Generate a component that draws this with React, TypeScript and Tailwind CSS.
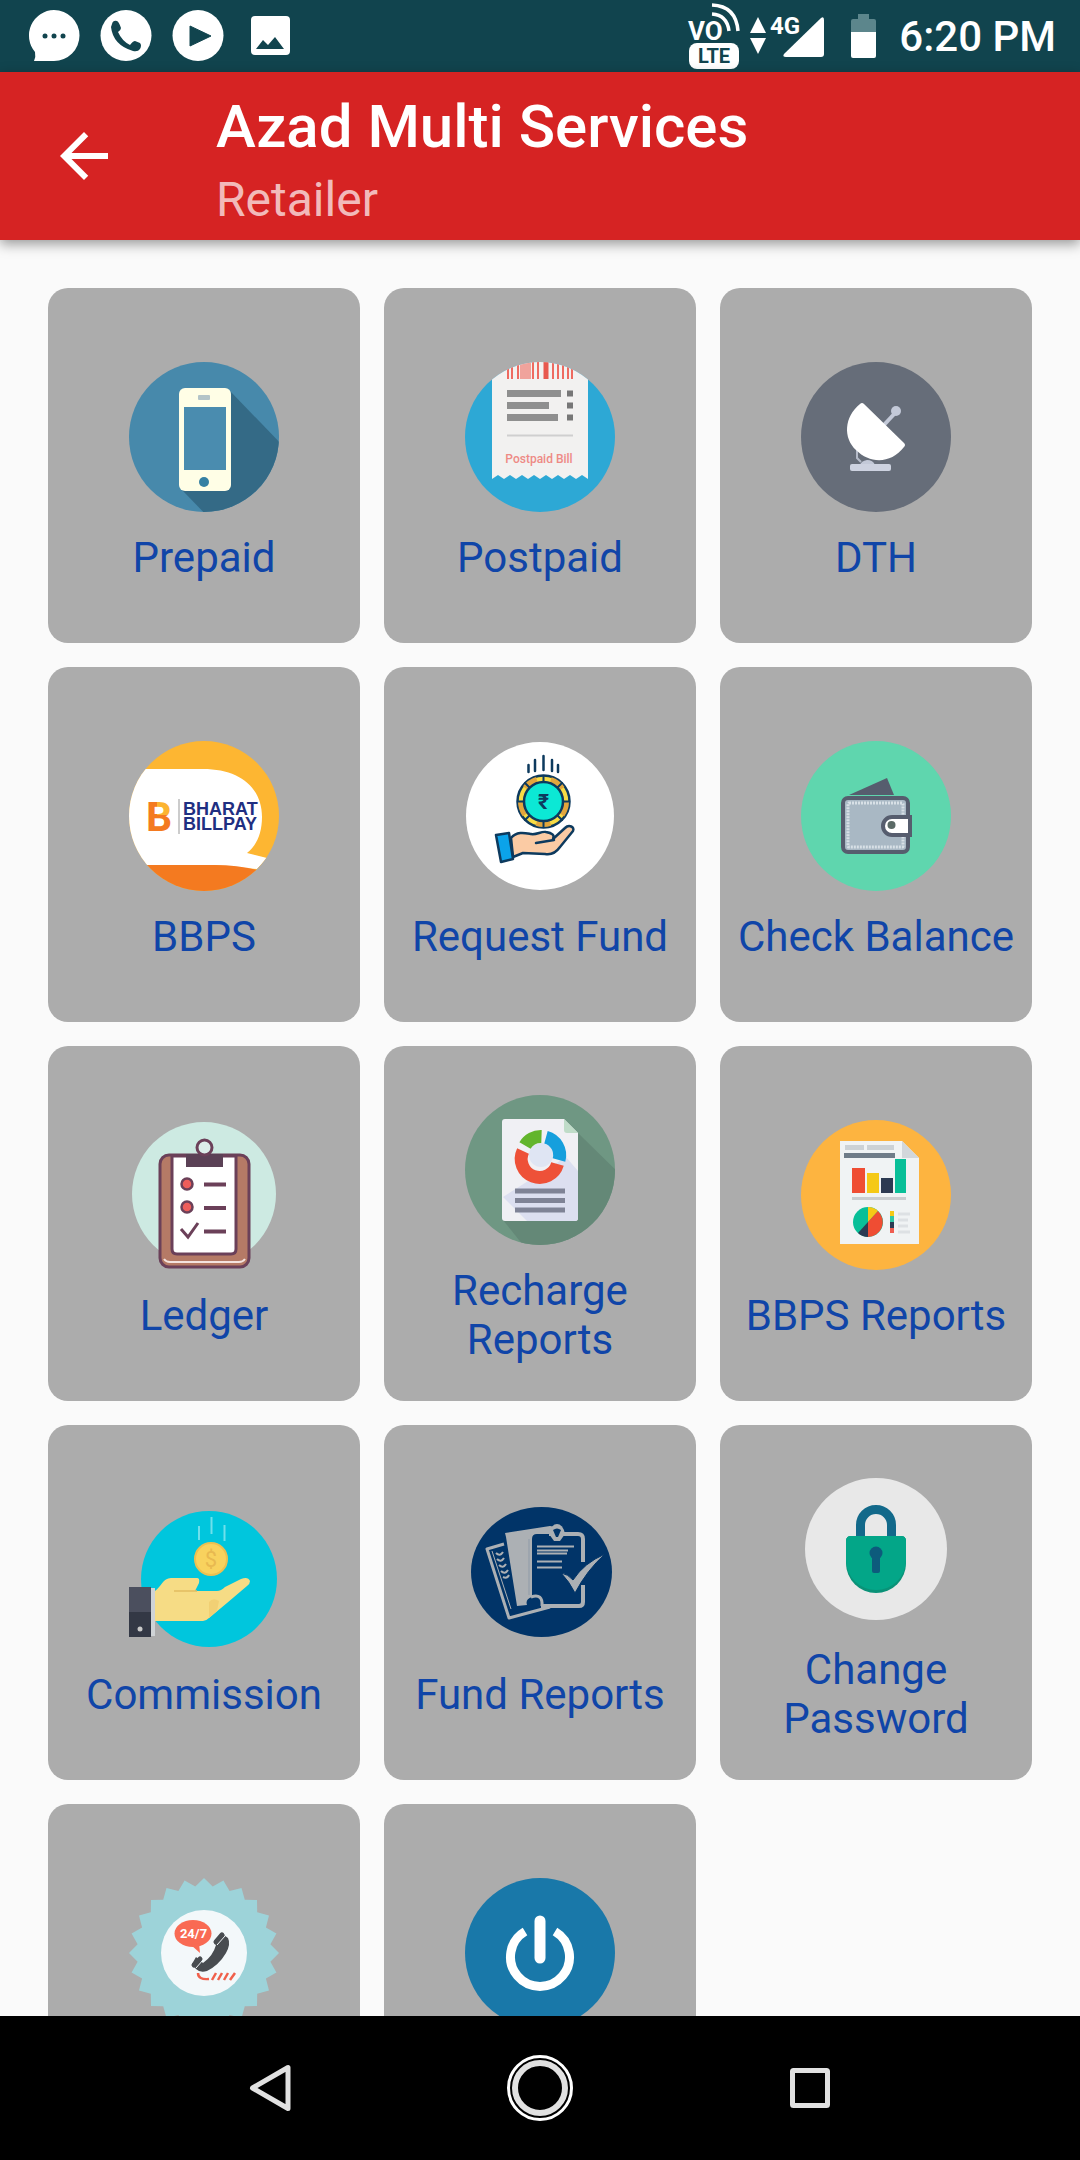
import type { ReactNode } from "react";

type Service = {
  label: string;
  icon: ReactNode;
};

function Icon({ children }: { children: ReactNode }) {
  return (
    <svg viewBox="0 0 150 150" className="size-[150px] shrink-0" aria-hidden="true">
      {children}
    </svg>
  );
}

function PrepaidIcon() {
  return (
    <Icon>
      <clipPath id="prepaid-disc"><circle cx="75" cy="75" r="75" /></clipPath>
      <g clipPath="url(#prepaid-disc)">
        <rect width="150" height="150" fill="#4789ab" />
        <path d="M101 29 L160 90 V160 H84 L53 128Z" fill="#346a86" />
      </g>
      <rect x="50" y="26" width="52" height="103" rx="6" fill="#fffee6" />
      <rect x="55" y="45" width="42" height="63" fill="#4a8caf" />
      <rect x="69" y="33" width="12" height="5" rx="1" fill="#b3c4c8" />
      <circle cx="75" cy="120" r="5" fill="#3580a3" />
    </Icon>
  );
}

function PostpaidIcon() {
  return (
    <Icon>
      <clipPath id="postpaid-disc"><circle cx="75" cy="75" r="75" /></clipPath>
      <g clipPath="url(#postpaid-disc)">
        <rect width="150" height="150" fill="#2da8d5" />
        <path d="M27 0H123V117L117 113L111 117L105 113L99 117L93 113L87 117L81 113L75 117L69 113L63 117L57 113L51 117L45 113L39 117L33 113L27 117Z" fill="#f2f1f0" />
        <path d="M43 0V17M47 0V17M53 0V17M68 0V17M73 0V17M88 0V17M93 0V17M98 0V17M103 0V17M107 0V17" stroke="#ee6a60" strokeWidth="2" />
        <path d="M58 0V17M63 0V17" stroke="#f0a39c" strokeWidth="6" />
        <path d="M81 0V17" stroke="#e8584e" strokeWidth="5" />
      </g>
      <path d="M42 31.5H96M42 43.5H84M42 55.5H93" stroke="#8f8f8f" strokeWidth="7" />
      <path d="M102 31.5H108M102 43.5H108M102 55.5H108" stroke="#777" strokeWidth="6" />
      <path d="M42 73.5H108" stroke="#cfcfcf" strokeWidth="2" />
      <text x="74" y="101" textAnchor="middle" fontSize="12" fontWeight="500" fontFamily="Roboto" fill="#ee8a85">Postpaid Bill</text>
    </Icon>
  );
}

function DthIcon() {
  return (
    <Icon>
      <circle cx="75" cy="75" r="75" fill="#666d79" />
      <path d="M82 64L95 50" stroke="#c3c9d8" strokeWidth="4" />
      <circle cx="95" cy="49" r="5" fill="#c3c9d8" />
      <path d="M56 86V96L60 100" stroke="#b4bac8" strokeWidth="2" fill="none" />
      <path d="M59 103Q60 99 66 98Q72 98 74 103Z" fill="#c3c9d8" />
      <rect x="49" y="102" width="41" height="7" rx="2" fill="#cdd2e0" />
      <path d="M59 42C43 55 42 76 55 88C69 102 90 102 103 85Q105 83 103 81L63 42Q61 40 59 42Z" fill="#fff" />
    </Icon>
  );
}

function BbpsIcon() {
  return (
    <Icon>
      <clipPath id="bbps-disc"><circle cx="75" cy="75" r="75" /></clipPath>
      {/* orange letter with a yellow upper bowl */}
      <pattern id="bbps-letter" width="150" height="150" patternUnits="userSpaceOnUse">
        <rect width="150" height="150" fill="#f47a20" />
        <rect x="28" y="50" width="30" height="24" fill="#fcb431" />
      </pattern>
      <g clipPath="url(#bbps-disc)">
        <rect width="150" height="150" fill="#fdb632" />
        <path d="M0 28H74C110 28 133 46 133 76C133 92 128 104 118 112L138 117L128 128L85 124H0Z" fill="#fff" />
        <path d="M0 124H85Q110 124 128 129L140 150H0Z" fill="#f47a20" />
      </g>
      <text x="17" y="90" fontSize="41" fontWeight="700" fontFamily="Roboto" fill="url(#bbps-letter)">B</text>
      <path d="M50 58V93" stroke="#999" strokeWidth="1" />
      <g fontSize="18" fontWeight="700" fontFamily="'Liberation Sans', sans-serif" fill="#1f2f82">
        <text x="54" y="74">BHARAT</text>
        <text x="54" y="89">BILLPAY</text>
      </g>
    </Icon>
  );
}

function RequestFundIcon() {
  return (
    <Icon>
      <circle cx="75" cy="75" r="74" fill="#fff" />
      <g stroke="#0d3a5e" strokeWidth="2.5" strokeLinejoin="round" strokeLinecap="round">
        <path d="M63.5 24V31M70 19V30M78.5 15V29M87 19V30M93 24V31" />
        <circle cx="78.5" cy="60.5" r="26" fill="#f7dc45" />
        <circle cx="78.5" cy="60.5" r="23" fill="none" stroke="#e2a63d" strokeWidth="5" strokeDasharray="14.4 14.4" strokeLinecap="butt" />
        <path d="M78.5 35V86M53 60.5H104M60 42L97 79M97 42L60 79" strokeWidth="2" />
        <circle cx="78.5" cy="60.5" r="19.5" fill="#0ce8d5" />
        <path d="M46 97C52 90 60 92 66 93C72 94 76 90 81 91C87 92 90 94 88 98L100 87C104 83 110 86 108 90L95 106C90 113 85 114 80 113L58 112L48 116Z" fill="#fbcba4" />
        <path d="M71 102L89 99" fill="none" />
        <path d="M31 94L44 92L48 118L36 121Z" fill="#0ba3ea" />
      </g>
      <text x="78.5" y="68" textAnchor="middle" fontSize="21" fontWeight="700" fontFamily="Roboto, 'Noto Sans', sans-serif" fill="#0d3a5e">₹</text>
    </Icon>
  );
}

function WalletIcon() {
  return (
    <Icon>
      <circle cx="75" cy="75" r="75" fill="#5fd6ae" />
      <path d="M48 54L86 37L93 54Z" fill="#565d6e" />
      <rect x="42" y="57" width="65" height="54" rx="5" fill="#a9b8c4" stroke="#565d6e" strokeWidth="4" />
      <rect x="47" y="62" width="55" height="44" rx="1" fill="none" stroke="#d8e0e6" strokeWidth="3" strokeDasharray="2 1" />
      <path d="M109 76H91A9 9 0 0 0 91 94H109Z" fill="#fff" stroke="#565d6e" strokeWidth="4" />
      <circle cx="90.5" cy="84" r="4" fill="#5b6a66" />
    </Icon>
  );
}

function LedgerIcon() {
  return (
    <Icon>
      <circle cx="75" cy="74" r="72" fill="#cdeae2" />
      <path d="M32 130H119V150H32Z" fill="#acacac" />
      <rect x="31" y="35" width="89" height="112" rx="9" fill="#b57a66" stroke="#6b4059" strokeWidth="3" />
      <path d="M43 36H107V129Q107 134 102 134H48Q43 134 43 129Z" fill="#fff" stroke="#6b4059" strokeWidth="3" />
      <path d="M35 139Q37 142 41 142H110Q114 142 116 139" fill="none" stroke="#f4e3df" strokeWidth="2" />
      <rect x="57" y="34" width="37" height="13" fill="#5b4156" />
      <circle cx="75.5" cy="27.5" r="7.5" fill="#dceeea" stroke="#6b4059" strokeWidth="3" />
      <g fill="#ee5d5b" stroke="#6b4059" strokeWidth="2.5">
        <circle cx="58" cy="64" r="5.5" />
        <circle cx="58" cy="87" r="5.5" />
        <path d="M75 64.5H97M75 88H97M75 111.5H97" strokeWidth="4" />
        <path d="M52 109L59 117L69 103" fill="none" strokeWidth="3" />
      </g>
    </Icon>
  );
}

function RechargeReportsIcon() {
  return (
    <Icon>
      <clipPath id="recharge-disc"><circle cx="75" cy="75" r="75" /></clipPath>
      <g clipPath="url(#recharge-disc)">
        <rect width="150" height="150" fill="#6f9783" />
        <path d="M112 37L160 84V160H66L38 125Z" fill="#648877" />
      </g>
      <path d="M40 24H99L113 38V123Q113 126 110 126H40Q37 126 37 123V27Q37 24 40 24Z" fill="#f0f0f4" />
      <path d="M101 62L113 76V123Q113 126 110 126H62L38 102Z" fill="#dcdff0" />
      <path d="M99 24L113 38H102Q99 38 99 35Z" fill="#bfdcc8" />
      <circle cx="76" cy="60" r="12" fill="#dfe5f3" />
      <g fill="none" strokeWidth="13">
        <path d="M81 42.2A18.5 18.5 0 0 1 94 65" stroke="#159fdd" />
        <path d="M92.5 69A18.5 18.5 0 1 1 58 56" stroke="#ee5138" />
        <path d="M60 50.5A18.5 18.5 0 0 1 76.5 41.5" stroke="#62b52c" />
      </g>
      <path d="M50 96H100M50 105.5H100M50 115H100" stroke="#7f8396" strokeWidth="5" />
    </Icon>
  );
}

function BbpsReportsIcon() {
  return (
    <Icon>
      <circle cx="75" cy="75" r="75" fill="#fdb440" />
      <path d="M39 21H101L118 38V124H39Z" fill="#f0f3f4" />
      <path d="M101 21L118 38H101Z" fill="#d2d7db" />
      <path d="M44 27.5H63M66 27.5H93" stroke="#ccd2d6" strokeWidth="5" />
      <path d="M43 35.5H94" stroke="#6f7c88" strokeWidth="5" />
      <rect x="51" y="48" width="13" height="25" fill="#ef4d33" />
      <rect x="66" y="53" width="12" height="20" fill="#f5c916" />
      <rect x="80" y="58" width="12" height="15" fill="#2c3a52" />
      <rect x="94" y="39" width="11" height="34" fill="#08bf98" />
      <path d="M51 78.5H105" stroke="#c9cdd0" strokeWidth="3" />
      <circle cx="67" cy="102" r="15" fill="#08bf98" />
      <path d="M67 102V87A15 15 0 0 1 77 91Z" fill="#f5c916" />
      <path d="M67 102L77 91A15 15 0 0 1 67 117Z" fill="#ef4d33" />
      <path d="M67 102V117A15 15 0 0 1 57 113Z" fill="#2c3a52" />
      <path d="M91 91V96" stroke="#f5c916" strokeWidth="4" />
      <path d="M91 96V102" stroke="#2fc7a5" strokeWidth="4" />
      <path d="M91 102V108" stroke="#2c3a52" strokeWidth="4" />
      <path d="M91 108V113" stroke="#ef5d50" strokeWidth="4" />
      <path d="M97 94H109M97 100H107M97 106H107M97 112H109" stroke="#dde1e4" strokeWidth="3" />
    </Icon>
  );
}

function CommissionIcon() {
  return (
    <Icon>
      <circle cx="80" cy="80" r="68" fill="#00c6dd" />
      <path d="M70 27V41M82.5 18V35M95.5 26V42" stroke="#6fe0ec" strokeWidth="2" />
      <circle cx="82" cy="60" r="16" fill="#f8d25e" stroke="#edc050" strokeWidth="2" />
      <text x="82" y="68" textAnchor="middle" fontSize="22" fontFamily="Roboto" fill="#e8b950">$</text>
      <path d="M26 92C32 88 34 79 42 79H68Q71 79 70 84L66 92H88Q92 92 96 88L112 80Q119 77 121 82Q121 85 118 87L98 104L80 119Q77 122 74 122H26Z" fill="#f6dc85" />
      <path d="M45 92H68" stroke="#e2bd60" strokeWidth="1.5" />
      <path d="M80 112V103Q84 98 90 102L88 112L80 119Z" fill="#f1d074" />
      <rect x="22" y="89" width="4" height="48" fill="#cfd3d6" />
      <rect x="0" y="88" width="22" height="50" fill="#4b4f5e" />
      <path d="M0 113H22V138H0Z" fill="#333845" />
      <circle cx="11" cy="130" r="2.5" fill="#c9c9c9" />
    </Icon>
  );
}

function FundReportsIcon() {
  return (
    <Icon>
      <ellipse cx="76.5" cy="73" rx="70.5" ry="65" fill="#013468" />
      <g fill="none" stroke="#acb0b4" strokeWidth="3" strokeLinejoin="round">
        <path d="M39 45L22 50L44 119L85 108" />
        <path d="M31 54Q35 58 38 53M32 60Q36 64 39 59M34 66Q38 70 41 65M36 72Q40 76 43 71M38 78Q42 80 44 76" strokeWidth="2" />
        <path d="M27 52L46 110" strokeWidth="1" />
        <path d="M84 35H113Q118 35 118 40V63M118 86V103Q118 107 114 107H76" strokeWidth="4" />
        <path d="M66 98Q78 94 77 107" />
      </g>
      <path d="M40 34L85 27Q90 27 88 35H72Q67 35 67 40V98Q60 100 62 106L52 107L41 38Z" fill="#acb0b4" />
      <path d="M64 40V96" stroke="#8e9aa8" strokeWidth="1" />
      <path d="M72 47.5H109M72 51.5H103M72 54.5H102M72 62.5H97M72 68.5H97" stroke="#acb0b4" strokeWidth="2" />
      <path d="M84 35Q86 25 92 25Q98 25 100 35L95 42H89Z" fill="#acb0b4" />
      <path d="M88 31Q92 28 96 31L93 38H91Z" fill="#013468" />
      <path d="M96 74Q103 75 108 81Q119 64 140 55Q122 71 110 94Q104 82 96 74Z" fill="#acb0b4" stroke="#013468" strokeWidth="1" />
    </Icon>
  );
}

function LockIcon() {
  return (
    <Icon>
      <circle cx="75" cy="75" r="71" fill="#e8e8e8" />
      <path d="M59.5 65V51A15.5 15.5 0 0 1 90.5 51V65" fill="none" stroke="#12698a" strokeWidth="9" />
      <path d="M50 62H100Q105 62 105 67V89A30 30 0 0 1 45 89V67Q45 62 50 62Z" fill="#0a9278" />
      <path d="M50 62H100Q105 62 105 67V86A30 30 0 0 1 45 86V67Q45 62 50 62Z" fill="#03a688" />
      <circle cx="75" cy="79" r="6.5" fill="#0d5b7c" />
      <rect x="71" y="80" width="8" height="19" rx="2" fill="#0d5b7c" />
    </Icon>
  );
}

// 24 point badge outline
const badgePoints = Array.from({ length: 48 }, (_, i) => {
  const r = i % 2 === 0 ? 75 : 67;
  const a = (i * Math.PI) / 24;
  return `${(75 + r * Math.sin(a)).toFixed(1)},${(75 - r * Math.cos(a)).toFixed(1)}`;
}).join(" ");

function SupportIcon() {
  return (
    <Icon>
      <polygon points={badgePoints} fill="#9dd3d9" />
      <circle cx="75" cy="75" r="43" fill="#f3f8fa" />
      <ellipse cx="64" cy="55.5" rx="18.5" ry="13.5" fill="#f96a53" />
      <path d="M62 67L71 75L70 65Z" fill="#f96a53" />
      <text x="64.5" y="60" textAnchor="middle" fontSize="13" fontWeight="700" fontFamily="Roboto" fill="#fff">24/7</text>
      <path d="M92 55L99 60Q102 66 97 75Q90 87 78 93Q71 95 67 91L63 86L67 79L74 85Q84 78 87 67L85 64Z" fill="#484c50" />
      <path d="M87 64L93 57M65 87L71 81" stroke="#484c50" strokeWidth="5" strokeLinecap="round" />
      <path d="M88 67L96 58M67 90L74 82" stroke="#f3f8fa" strokeWidth="1" />
      <path d="M69 95Q69 102 80 101M83 102L87 95M89 102L93 95M95 102L99 95M101 102L106 95" stroke="#f0604b" strokeWidth="2.5" fill="none" />
    </Icon>
  );
}

function PowerIcon() {
  return (
    <Icon>
      <circle cx="75" cy="75" r="75" fill="#1978a9" />
      <path d="M60 53.5A29.5 29.5 0 1 0 90 53.5" fill="none" stroke="#fff" strokeWidth="9" />
      <path d="M75 43V80" stroke="#fff" strokeWidth="11" strokeLinecap="round" />
    </Icon>
  );
}

const services: Service[] = [
  { label: "Prepaid", icon: <PrepaidIcon /> },
  { label: "Postpaid", icon: <PostpaidIcon /> },
  { label: "DTH", icon: <DthIcon /> },
  { label: "BBPS", icon: <BbpsIcon /> },
  { label: "Request Fund", icon: <RequestFundIcon /> },
  { label: "Check Balance", icon: <WalletIcon /> },
  { label: "Ledger", icon: <LedgerIcon /> },
  { label: "Recharge Reports", icon: <RechargeReportsIcon /> },
  { label: "BBPS Reports", icon: <BbpsReportsIcon /> },
  { label: "Commission", icon: <CommissionIcon /> },
  { label: "Fund Reports", icon: <FundReportsIcon /> },
  { label: "Change Password", icon: <LockIcon /> },
  { label: "Support", icon: <SupportIcon /> },
  { label: "Logout", icon: <PowerIcon /> },
];

function StatusBar() {
  return (
    <div className="flex h-[72px] shrink-0 items-center justify-between bg-[#11444e] pl-[18px] pr-6 text-white">
      {/* NOTIFICATIONS */}
      <div className="flex">
        <svg viewBox="0 0 72 72" className="size-[72px]" aria-hidden="true">
          <path d="M36 10A25.5 25.5 0 1 1 36 61H16Q18 57 17 52A25.5 25.5 0 0 1 36 10Z" fill="#fff" />
          <g fill="#11444e"><circle cx="27" cy="36" r="2.5" /><circle cx="36" cy="36" r="2.5" /><circle cx="45" cy="36" r="2.5" /></g>
        </svg>
        <svg viewBox="0 0 72 72" className="size-[72px]" aria-hidden="true">
          <circle cx="36" cy="35.5" r="25.5" fill="#fff" />
          <path d="M22 24Q23 20 27 21Q29 22 31 28Q31 30 28 32Q32 41 40 45Q43 41 45 41L50 43Q52 45 50 49Q48 52 43 51Q23 45 21 27Z" fill="#11444e" />
        </svg>
        <svg viewBox="0 0 72 72" className="size-[72px]" aria-hidden="true">
          <circle cx="36" cy="35.5" r="25.5" fill="#fff" />
          <path d="M28 26L49 36L28 46Z" fill="#11444e" strokeLinejoin="round" stroke="#11444e" strokeWidth="1" />
        </svg>
        <svg viewBox="0 0 72 72" className="size-[72px]" aria-hidden="true">
          <rect x="17" y="16" width="39" height="39" rx="4" fill="#fff" />
          <path d="M22 49L29 40L34 45L41 37L50 49Z" fill="#11444e" />
        </svg>
      </div>

      {/* SIGNAL, BATTERY, CLOCK */}
      <div className="flex items-center">
        <svg viewBox="-1 0 212 72" className="h-[72px] w-[212px]" aria-hidden="true">
          <g fontFamily="Roboto" fontWeight="700">
            <text x="0" y="40" fontSize="26" fill="#fff">VO</text>
            <rect x="1" y="43" width="50" height="26" rx="8" fill="#fff" />
            <text x="26" y="63" textAnchor="middle" fontSize="20" fill="#11444e">LTE</text>
            <text x="82" y="34" fontSize="24" fill="#fff">4G</text>
          </g>
          <path d="M24 5Q48 6 50 31M24 14Q39 15 41 31" fill="none" stroke="#fff" strokeWidth="3.5" />
          <path d="M70 17L78 33H62ZM62 38H78L70 54Z" fill="#fff" />
          <path d="M96 54L133 18Q136 16 136 20V54Q136 57 133 57H98Q94 57 96 54Z" fill="#fff" />
          <path d="M170 14H181V19H186Q188 19 188 21V32H163V21Q163 19 165 19H170Z" fill="#5c868c" />
          <path d="M163 32H188V56Q188 58 186 58H165Q163 58 163 56Z" fill="#fff" />
        </svg>
        <span className="text-[42px] font-medium leading-[49px]">6:20 PM</span>
      </div>
    </div>
  );
}

function NavBar() {
  return (
    <nav className="grid h-36 shrink-0 grid-cols-3 justify-items-center bg-black px-[12.5%]">
      <button type="button" aria-label="Back">
        <svg viewBox="0 0 72 72" className="size-[72px]" aria-hidden="true">
          <path d="M54 15.5V56.5L18.5 36Z" fill="none" stroke="#e1e1e1" strokeWidth="5" strokeLinejoin="round" />
        </svg>
      </button>
      <button type="button" aria-label="Home">
        <svg viewBox="0 0 72 72" className="size-[72px]" aria-hidden="true">
          <circle cx="36" cy="36" r="31.5" fill="none" stroke="#fff" strokeWidth="3" />
          <circle cx="36" cy="36" r="25" fill="none" stroke="#e1e1e1" strokeWidth="6" />
        </svg>
      </button>
      <button type="button" aria-label="Recent apps">
        <svg viewBox="0 0 72 72" className="size-[72px]" aria-hidden="true">
          <rect x="18.5" y="18.5" width="35" height="35" rx="1" fill="none" stroke="#e1e1e1" strokeWidth="5" />
        </svg>
      </button>
    </nav>
  );
}

export default function App() {
  return (
    <div className="flex h-screen flex-col bg-[#fafafa] font-[Roboto,sans-serif]">
      <StatusBar />

      {/* APP BAR */}
      <header className="relative z-10 flex h-[168px] shrink-0 bg-[#d62323] text-white shadow-[0_4px_12px_rgba(0,0,0,0.4)]">
        <button type="button" aria-label="Go back" className="flex w-[168px] items-center justify-center">
          <svg viewBox="0 0 24 24" className="size-[72px]" fill="currentColor" aria-hidden="true">
            <path d="M20 11H7.83l5.59-5.59L12 4l-8 8 8 8 1.41-1.41L7.83 13H20v-2z" />
          </svg>
        </button>
        <div className="ml-12 pt-5">
          <h1 className="text-[60px] font-medium leading-[70px]">Azad Multi Services</h1>
          <p className="mt-[10px] text-5xl leading-[56px] text-white/70">Retailer</p>
        </div>
      </header>

      {/* SERVICES */}
      <main className="min-h-0 flex-1 overflow-y-auto [scrollbar-width:none]">
        <div className="grid grid-cols-3 gap-6 p-12">
          {services.map((s) => (
            <button
              key={s.label}
              type="button"
              className="flex h-[355px] flex-col items-center justify-center gap-[21px] rounded-[20px] bg-[#acacac] px-4 pt-3 text-[42px] leading-[49px] text-[#1045a8]"
            >
              {s.icon}
              <span>{s.label}</span>
            </button>
          ))}
        </div>
      </main>

      <NavBar />
    </div>
  );
}
